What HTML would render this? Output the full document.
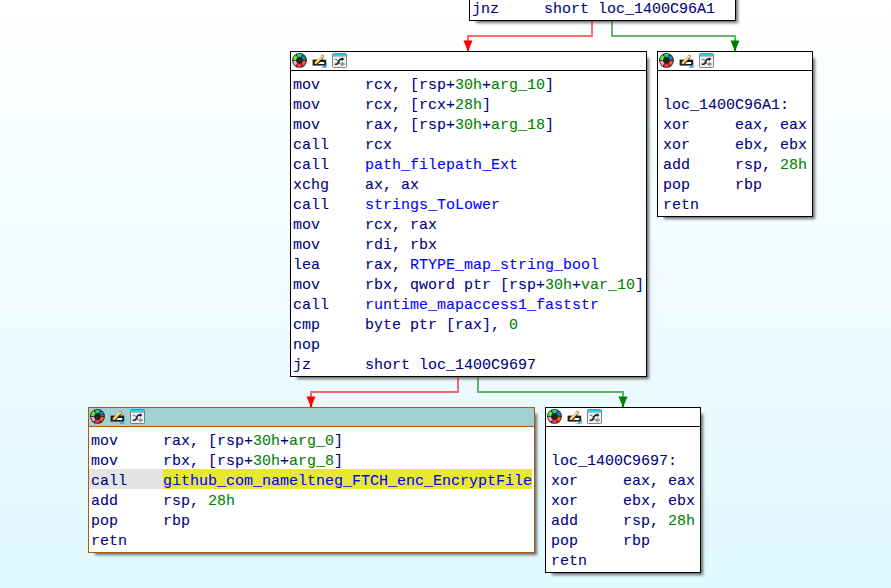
<!DOCTYPE html>
<html>
<head>
<meta charset="utf-8">
<title>IDA View-A</title>
<style>
html,body{margin:0;padding:0;}
body{width:891px;height:588px;overflow:hidden;position:relative;
  background:linear-gradient(to bottom,#ffffff 0px,#e0f8ff 588px);
  font-family:"Liberation Mono",monospace;font-size:15px;line-height:20px;color:#000080;}
.sh{position:absolute;background:rgba(0,0,0,0.56);filter:blur(1.5px);}
.blk{position:absolute;box-sizing:border-box;border:1px solid #000;background:#fff;}
.tb{position:absolute;left:0;top:0;right:0;height:18px;border-bottom:1px solid #000;background:#fff;}
.blk.sel{border-color:#b35900;}
.blk.sel .tb{background:#a0d0d0;border-bottom-color:#b35900;}
.ic{position:absolute;top:1px;width:16px;height:16px;}
.i1{left:1px}.i2{left:21px}.i3{left:41px}
pre{margin:0;position:absolute;font:inherit;white-space:pre;-webkit-text-stroke:.08px;}
.g{color:#008000}.b{color:#0000ff}
.hl{position:absolute;height:20px;}
svg.edges{position:absolute;left:0;top:0;}
</style>
</head>
<body>

<svg width="0" height="0" style="position:absolute">
<defs>
<g id="ic1">
<circle cx="7.5" cy="7.4" r="7.4" fill="#242424"/>
<g transform="translate(7.5,7.4)">
<path id="w" d="M-1.55,-3.15 L-2.7,-5.95 A6.55,6.55 0 0 1 2.7,-5.95 L1.55,-3.15 A3.5,3.5 0 0 0 -1.55,-3.15Z" fill="#00e07a"/>
<path d="M-1.55,-3.15 L-2.7,-5.95 A6.55,6.55 0 0 1 2.7,-5.95 L1.55,-3.15 A3.5,3.5 0 0 0 -1.55,-3.15Z" fill="#1a78b4" transform="rotate(60)"/>
<path d="M-1.55,-3.15 L-2.7,-5.95 A6.55,6.55 0 0 1 2.7,-5.95 L1.55,-3.15 A3.5,3.5 0 0 0 -1.55,-3.15Z" fill="#ff5a14" transform="rotate(120)"/>
<path d="M-1.55,-3.15 L-2.7,-5.95 A6.55,6.55 0 0 1 2.7,-5.95 L1.55,-3.15 A3.5,3.5 0 0 0 -1.55,-3.15Z" fill="#ff2d55" transform="rotate(180)"/>
<path d="M-1.55,-3.15 L-2.7,-5.95 A6.55,6.55 0 0 1 2.7,-5.95 L1.55,-3.15 A3.5,3.5 0 0 0 -1.55,-3.15Z" fill="#ffa6b4" transform="rotate(240)"/>
<path d="M-1.55,-3.15 L-2.7,-5.95 A6.55,6.55 0 0 1 2.7,-5.95 L1.55,-3.15 A3.5,3.5 0 0 0 -1.55,-3.15Z" fill="#5cf52e" transform="rotate(300)"/>
</g>
</g>
<g id="ic2">
<rect x="0.6" y="6.6" width="13.6" height="6" fill="#1e1e1e"/>
<path d="M5.9,11.1 L8,9 H12.2 V11.1Z" fill="#fff"/>
<path d="M14.7,10.7 L14.7,14.7 L10.2,14.7Z" fill="#19c8f0"/>
<path d="M14.6,10.5 L10.4,14.7 H9.8" stroke="#1e4a5a" stroke-width=".6" fill="none"/>
<path d="M4.5,10.4 L10.2,4.7" stroke="#1e1e1e" stroke-width="2.6" stroke-linecap="butt"/>
<circle cx="10.45" cy="3.5" r="1.75" fill="#4a3c3c" fill-opacity=".85"/>
<path d="M3.9,9.8 L9.6,4.1" stroke="#ffd25a" stroke-width="2.6" stroke-linecap="round"/>
<circle cx="10.45" cy="3.45" r="1.3" fill="#efd0c2"/>
</g>
<g id="ic3">
<rect x="0.5" y="0.5" width="14" height="14" rx="0.9" fill="#f1f1f1" stroke="#5c6a6a" stroke-opacity=".8" stroke-width="1"/>
<rect x="1" y="1" width="13" height="2.1" fill="#0cd8ff"/>
<rect x="1" y="3.1" width="13" height=".8" fill="#8fa6aa" fill-opacity=".7"/>
<path d="M2.6,6.2 H3.8 C6.9,6.2 6.4,11.3 9.2,11.3 H10" fill="none" stroke="#6e6e6e" stroke-width="1"/>
<path d="M10,9.5 L12.6,11.1 L10,12.7Z" fill="#dcdcdc" stroke="#555" stroke-width=".7"/>
<path d="M2.7,11.3 H4.3 C7.6,11.3 5.9,6.1 8.8,6.1 H10.4" fill="none" stroke="#1c1c1c" stroke-width="1.6"/>
<path d="M9.9,4.3 L12.4,6.1 L9.9,7.9Z" fill="#1c1c1c"/>
</g>
</defs>
</svg>

<!-- shadows -->
<div class="sh" style="left:475.6px;top:-23.4px;width:262.8px;height:46.8px"></div>
<div class="sh" style="left:296.6px;top:57.6px;width:352.8px;height:321.8px"></div>
<div class="sh" style="left:663.6px;top:57.6px;width:151.8px;height:161.8px"></div>
<div class="sh" style="left:94.6px;top:413.6px;width:442.8px;height:141.8px"></div>
<div class="sh" style="left:551.6px;top:413.6px;width:151.8px;height:161.8px"></div>

<!-- edges -->
<svg class="edges" width="891" height="588" viewBox="0 0 891 588">
<g fill="none" stroke-width="2" stroke-opacity=".58" shape-rendering="crispEdges">
<path d="M592,21 V36 H468 V42" stroke="#ff0000"/>
<path d="M612,21 V36 H735 V42" stroke="#008000"/>
<path d="M458,377 V392 H311 V398" stroke="#ff0000"/>
<path d="M478,377 V392 H623 V398" stroke="#008000"/>
</g>
<path d="M463.5,40.5 H472.5 L469.1,48.8 V51.6 H466.9 V48.8Z" fill="#ff0000"/>
<path d="M730.5,40.5 H739.5 L736.1,48.8 V51.6 H733.9 V48.8Z" fill="#008000"/>
<path d="M306.5,396.5 H315.5 L312.1,404.8 V407.6 H309.9 V404.8Z" fill="#ff0000"/>
<path d="M618.5,396.5 H627.5 L624.1,404.8 V407.6 H621.9 V404.8Z" fill="#008000"/>
</svg>

<!-- block A (top, partially visible) -->
<div class="blk" style="left:469px;top:-30px;width:267px;height:51px">
<pre style="left:2px;top:29px">jnz     short loc_1400C96A1</pre>
</div>

<!-- main block -->
<div class="blk" style="left:290px;top:51px;width:357px;height:326px">
<div class="tb"><svg class="ic i1" viewBox="0 0 16 16"><use href="#ic1"/></svg><svg class="ic i2" viewBox="0 0 16 16"><use href="#ic2"/></svg><svg class="ic i3" viewBox="0 0 16 16"><use href="#ic3"/></svg></div>
<pre style="left:2px;top:24px">mov     rcx, [rsp+<span class="g">30h</span>+<span class="g">arg_10</span>]
mov     rcx, [rcx+<span class="g">28h</span>]
mov     rax, [rsp+<span class="g">30h</span>+<span class="g">arg_18</span>]
call    rcx
call    <span class="b">path_filepath_Ext</span>
xchg    ax, ax
call    <span class="b">strings_ToLower</span>
mov     rcx, rax
mov     rdi, rbx
lea     rax, <span class="b">RTYPE_map_string_bool</span>
mov     rbx, qword ptr [rsp+<span class="g">30h</span>+<span class="g">var_10</span>]
call    <span class="b">runtime_mapaccess1_faststr</span>
cmp     byte ptr [rax], <span class="g">0</span>
nop
jz      short loc_1400C9697</pre>
</div>

<!-- block B -->
<div class="blk" style="left:657px;top:51px;width:156px;height:166px">
<div class="tb"><svg class="ic i1" viewBox="0 0 16 16"><use href="#ic1"/></svg><svg class="ic i2" viewBox="0 0 16 16"><use href="#ic2"/></svg><svg class="ic i3" viewBox="0 0 16 16"><use href="#ic3"/></svg></div>
<pre style="left:5px;top:24px">

loc_1400C96A1:
xor     eax, eax
xor     ebx, ebx
add     rsp, <span class="g">28h</span>
pop     rbp
retn</pre>
</div>

<!-- block C (selected) -->
<div class="blk sel" style="left:88px;top:407px;width:447px;height:146px">
<div class="tb"><svg class="ic i1" viewBox="0 0 16 16"><use href="#ic1"/></svg><svg class="ic i2" viewBox="0 0 16 16"><use href="#ic2"/></svg><svg class="ic i3" viewBox="0 0 16 16"><use href="#ic3"/></svg></div>
<div class="hl" style="left:0;top:61px;width:74px;background:#e4e4e4"></div>
<div class="hl" style="left:74px;top:61px;width:369px;background:#e8e832"></div>
<pre style="left:2px;top:24px">mov     rax, [rsp+<span class="g">30h</span>+<span class="g">arg_0</span>]
mov     rbx, [rsp+<span class="g">30h</span>+<span class="g">arg_8</span>]
call    <span class="b">github_com_nameltneg_FTCH_enc_EncryptFile</span>
add     rsp, <span class="g">28h</span>
pop     rbp
retn</pre>
</div>

<!-- block D -->
<div class="blk" style="left:545px;top:407px;width:156px;height:166px">
<div class="tb"><svg class="ic i1" viewBox="0 0 16 16"><use href="#ic1"/></svg><svg class="ic i2" viewBox="0 0 16 16"><use href="#ic2"/></svg><svg class="ic i3" viewBox="0 0 16 16"><use href="#ic3"/></svg></div>
<pre style="left:5px;top:24px">

loc_1400C9697:
xor     eax, eax
xor     ebx, ebx
add     rsp, <span class="g">28h</span>
pop     rbp
retn</pre>
</div>

</body>
</html>
